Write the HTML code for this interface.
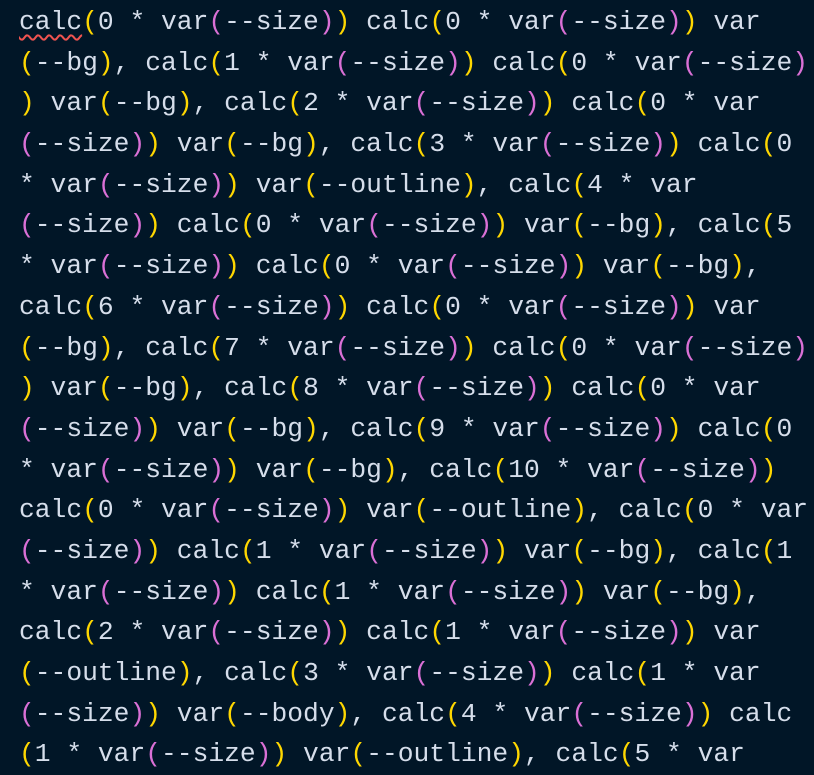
<!DOCTYPE html>
<html><head><style>
html,body{margin:0;padding:0;background:#011627;width:814px;height:772px;overflow:hidden}
.c{position:absolute;left:19px;top:2px;font-family:"Liberation Mono",monospace;font-size:26.3px;line-height:40.7px;color:#d6deeb}
.c div{height:40.7px;white-space:pre}
.y{color:#ffd700}.p{color:#da70d6}
.sq{text-decoration:underline wavy #ef5350;text-decoration-thickness:1.5px;text-underline-offset:5px}
</style></head><body>
<div class="c"><div><span class="sq">calc</span><span class="y">(</span>0 * var<span class="p">(</span>--size<span class="p">)</span><span class="y">)</span> calc<span class="y">(</span>0 * var<span class="p">(</span>--size<span class="p">)</span><span class="y">)</span> var</div><div><span class="y">(</span>--bg<span class="y">)</span>, calc<span class="y">(</span>1 * var<span class="p">(</span>--size<span class="p">)</span><span class="y">)</span> calc<span class="y">(</span>0 * var<span class="p">(</span>--size<span class="p">)</span></div><div><span class="y">)</span> var<span class="y">(</span>--bg<span class="y">)</span>, calc<span class="y">(</span>2 * var<span class="p">(</span>--size<span class="p">)</span><span class="y">)</span> calc<span class="y">(</span>0 * var</div><div><span class="p">(</span>--size<span class="p">)</span><span class="y">)</span> var<span class="y">(</span>--bg<span class="y">)</span>, calc<span class="y">(</span>3 * var<span class="p">(</span>--size<span class="p">)</span><span class="y">)</span> calc<span class="y">(</span>0</div><div>* var<span class="p">(</span>--size<span class="p">)</span><span class="y">)</span> var<span class="y">(</span>--outline<span class="y">)</span>, calc<span class="y">(</span>4 * var</div><div><span class="p">(</span>--size<span class="p">)</span><span class="y">)</span> calc<span class="y">(</span>0 * var<span class="p">(</span>--size<span class="p">)</span><span class="y">)</span> var<span class="y">(</span>--bg<span class="y">)</span>, calc<span class="y">(</span>5</div><div>* var<span class="p">(</span>--size<span class="p">)</span><span class="y">)</span> calc<span class="y">(</span>0 * var<span class="p">(</span>--size<span class="p">)</span><span class="y">)</span> var<span class="y">(</span>--bg<span class="y">)</span>,</div><div>calc<span class="y">(</span>6 * var<span class="p">(</span>--size<span class="p">)</span><span class="y">)</span> calc<span class="y">(</span>0 * var<span class="p">(</span>--size<span class="p">)</span><span class="y">)</span> var</div><div><span class="y">(</span>--bg<span class="y">)</span>, calc<span class="y">(</span>7 * var<span class="p">(</span>--size<span class="p">)</span><span class="y">)</span> calc<span class="y">(</span>0 * var<span class="p">(</span>--size<span class="p">)</span></div><div><span class="y">)</span> var<span class="y">(</span>--bg<span class="y">)</span>, calc<span class="y">(</span>8 * var<span class="p">(</span>--size<span class="p">)</span><span class="y">)</span> calc<span class="y">(</span>0 * var</div><div><span class="p">(</span>--size<span class="p">)</span><span class="y">)</span> var<span class="y">(</span>--bg<span class="y">)</span>, calc<span class="y">(</span>9 * var<span class="p">(</span>--size<span class="p">)</span><span class="y">)</span> calc<span class="y">(</span>0</div><div>* var<span class="p">(</span>--size<span class="p">)</span><span class="y">)</span> var<span class="y">(</span>--bg<span class="y">)</span>, calc<span class="y">(</span>10 * var<span class="p">(</span>--size<span class="p">)</span><span class="y">)</span></div><div>calc<span class="y">(</span>0 * var<span class="p">(</span>--size<span class="p">)</span><span class="y">)</span> var<span class="y">(</span>--outline<span class="y">)</span>, calc<span class="y">(</span>0 * var</div><div><span class="p">(</span>--size<span class="p">)</span><span class="y">)</span> calc<span class="y">(</span>1 * var<span class="p">(</span>--size<span class="p">)</span><span class="y">)</span> var<span class="y">(</span>--bg<span class="y">)</span>, calc<span class="y">(</span>1</div><div>* var<span class="p">(</span>--size<span class="p">)</span><span class="y">)</span> calc<span class="y">(</span>1 * var<span class="p">(</span>--size<span class="p">)</span><span class="y">)</span> var<span class="y">(</span>--bg<span class="y">)</span>,</div><div>calc<span class="y">(</span>2 * var<span class="p">(</span>--size<span class="p">)</span><span class="y">)</span> calc<span class="y">(</span>1 * var<span class="p">(</span>--size<span class="p">)</span><span class="y">)</span> var</div><div><span class="y">(</span>--outline<span class="y">)</span>, calc<span class="y">(</span>3 * var<span class="p">(</span>--size<span class="p">)</span><span class="y">)</span> calc<span class="y">(</span>1 * var</div><div><span class="p">(</span>--size<span class="p">)</span><span class="y">)</span> var<span class="y">(</span>--body<span class="y">)</span>, calc<span class="y">(</span>4 * var<span class="p">(</span>--size<span class="p">)</span><span class="y">)</span> calc</div><div><span class="y">(</span>1 * var<span class="p">(</span>--size<span class="p">)</span><span class="y">)</span> var<span class="y">(</span>--outline<span class="y">)</span>, calc<span class="y">(</span>5 * var</div></div>
</body></html>
